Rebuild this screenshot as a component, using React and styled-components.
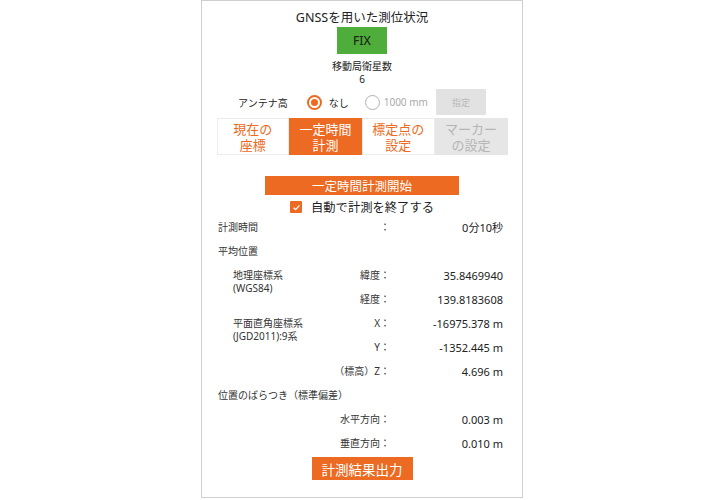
import React from "react";
import styled, { createGlobalStyle } from "styled-components";

const ORANGE = "#ec6a22";
const FONT = `"Noto Sans", "Noto Sans CJK JP", sans-serif`;

const Global = createGlobalStyle`
  html, body { margin: 0; padding: 0; background: #fff; }
  body { font-family: ${FONT}; color: #222; }
`;

const Panel = styled.div`
  box-sizing: border-box;
  width: 322px;
  height: 498px;
  margin: 0 auto;
  border: 1px solid #cfcfcf;
  display: flex;
  flex-direction: column;
  align-items: center;
`;

const Title = styled.div`
  margin-top: 9px;
  font-size: 12.5px;
  line-height: 16px;
  color: #222;
`;

const FixBadge = styled.div`
  margin-top: 1px;
  width: 50px;
  height: 27px;
  background: #4fae3b;
  color: #1d2a18;
  font-size: 12px;
  font-weight: 500;
  display: flex;
  align-items: center;
  justify-content: center;
`;

const SmallText = styled.div`
  margin-top: ${(p) => p.$mt || 0}px;
  font-size: 10px;
  line-height: 13px;
  color: #222;
`;

const AntennaRow = styled.div`
  margin-top: 3px;
  height: 26px;
  display: flex;
  align-items: center;
  font-size: 10px;
  color: #222;
`;

const Radio = styled.span`
  box-sizing: border-box;
  width: 15px;
  height: 15px;
  border-radius: 50%;
  border: ${(p) => (p.$on ? `2px solid ${ORANGE}` : "1.5px solid #b0b0b0")};
  margin-left: ${(p) => p.$ml}px;
  display: flex;
  align-items: center;
  justify-content: center;
  &::after {
    content: "";
    display: ${(p) => (p.$on ? "block" : "none")};
    width: 7px;
    height: 7px;
    border-radius: 50%;
    background: ${ORANGE};
  }
`;

const RadioText = styled.span`
  margin-left: ${(p) => p.$ml}px;
  color: ${(p) => (p.$muted ? "#aaa" : "#222")};
`;

const GrayButton = styled.div`
  margin-left: 8px;
  width: 50px;
  height: 26px;
  background: #e2e2e2;
  color: #b8b8b8;
  font-size: 9px;
  display: flex;
  align-items: center;
  justify-content: center;
  border-radius: 1px;
`;

const Tabs = styled.div`
  margin-top: 3px;
  width: 291px;
  height: 37px;
  display: grid;
  grid-template-columns: repeat(4, 1fr);
`;

const Tab = styled.div`
  box-sizing: border-box;
  display: flex;
  flex-direction: column;
  align-items: center;
  justify-content: center;
  text-align: center;
  font-size: 13px;
  line-height: 16px;
  background: ${(p) => (p.$active ? ORANGE : p.$disabled ? "#e6e6e6" : "#fff")};
  color: ${(p) => (p.$active ? "#fff" : p.$disabled ? "#b5b5b5" : ORANGE)};
  border: 1px solid ${(p) => (p.$active ? ORANGE : p.$disabled ? "#e6e6e6" : "#ececec")};
`;

const TabLine = styled.span`
  display: block;
  height: 16px;
  white-space: nowrap;
`;

const OrangeButton = styled.div`
  margin-top: ${(p) => p.$mt}px;
  width: ${(p) => p.$w}px;
  height: ${(p) => p.$h}px;
  background: ${ORANGE};
  color: #fff;
  font-size: ${(p) => p.$fs}px;
  display: flex;
  align-items: center;
  justify-content: center;
`;

const CheckRow = styled.div`
  margin-top: 5px;
  height: 14px;
  display: flex;
  align-items: center;
  font-size: 12.3px;
  color: #222;
`;

const CheckBox = styled.span`
  width: 12px;
  height: 12px;
  background: ${ORANGE};
  border-radius: 1px;
  margin-right: 9px;
  display: flex;
  align-items: center;
  justify-content: center;
`;

const DataGrid = styled.div`
  box-sizing: border-box;
  align-self: stretch;
  margin-top: 1px;
  padding: 0 19px 0 16px;
  display: grid;
  grid-template-columns: 100px 72px 1fr;
  grid-auto-rows: 24px;
  align-items: center;
  font-size: 10px;
  color: #333;
`;

const Label = styled.div`
  grid-column: ${(p) => (p.$full ? "1 / 4" : "1")};
  grid-row: ${(p) => (p.$span ? `span ${p.$span}` : "auto")};
  align-self: ${(p) => (p.$span ? "start" : "center")};
  padding-top: ${(p) => (p.$span ? 5.5 : 0)}px;
  padding-left: ${(p) => (p.$indent ? 15 : 0)}px;
  line-height: 13px;
  white-space: nowrap;
`;

const Key = styled.div`
  grid-column: 2;
  text-align: right;
  white-space: nowrap;
  line-height: 13px;
`;

const Value = styled.div`
  grid-column: 3;
  text-align: right;
  font-size: 11px;
  line-height: 13px;
  color: #222;
  white-space: nowrap;
`;

export default function App() {
  return (
    <>
      <Global />
      <Panel>
        <Title>GNSSを用いた測位状況</Title>
        <FixBadge>FIX</FixBadge>
        <SmallText $mt={6}>移動局衛星数</SmallText>
        <SmallText>6</SmallText>
        <AntennaRow>
          <span>アンテナ高</span>
          <Radio $on $ml={19} />
          <RadioText $ml={7}>なし</RadioText>
          <Radio $ml={16} />
          <RadioText $ml={4} $muted>1000 mm</RadioText>
          <GrayButton>指定</GrayButton>
        </AntennaRow>
        <Tabs>
          <Tab><TabLine>現在の</TabLine><TabLine>座標</TabLine></Tab>
          <Tab $active><TabLine>一定時間</TabLine><TabLine>計測</TabLine></Tab>
          <Tab><TabLine>標定点の</TabLine><TabLine>設定</TabLine></Tab>
          <Tab $disabled><TabLine>マーカー</TabLine><TabLine>の設定</TabLine></Tab>
        </Tabs>
        <OrangeButton $mt={21} $w={194} $h={19} $fs={12.5}>一定時間計測開始</OrangeButton>
        <CheckRow>
          <CheckBox>
            <svg width="9" height="9" viewBox="0 0 10 10">
              <path d="M1.8 5.2 L4 7.3 L8.3 2.6" fill="none" stroke="#fff" strokeWidth="1.4" />
            </svg>
          </CheckBox>
          自動で計測を終了する
        </CheckRow>
        <DataGrid>
          <Label>計測時間</Label>
          <Key>：</Key>
          <Value>0分10秒</Value>

          <Label $full>平均位置</Label>

          <Label $indent $span={2}>地理座標系<br />(WGS84)</Label>
          <Key>緯度：</Key>
          <Value>35.8469940</Value>
          <Key>経度：</Key>
          <Value>139.8183608</Value>

          <Label $indent $span={2}>平面直角座標系<br />(JGD2011):9系</Label>
          <Key>X：</Key>
          <Value>-16975.378 m</Value>
          <Key>Y：</Key>
          <Value>-1352.445 m</Value>

          <Label />
          <Key>（標高）Z：</Key>
          <Value>4.696 m</Value>

          <Label $full>位置のばらつき（標準偏差）</Label>

          <Label />
          <Key>水平方向：</Key>
          <Value>0.003 m</Value>

          <Label />
          <Key>垂直方向：</Key>
          <Value>0.010 m</Value>
        </DataGrid>
        <OrangeButton $mt={2} $w={101} $h={23} $fs={13.5}>計測結果出力</OrangeButton>
      </Panel>
    </>
  );
}
